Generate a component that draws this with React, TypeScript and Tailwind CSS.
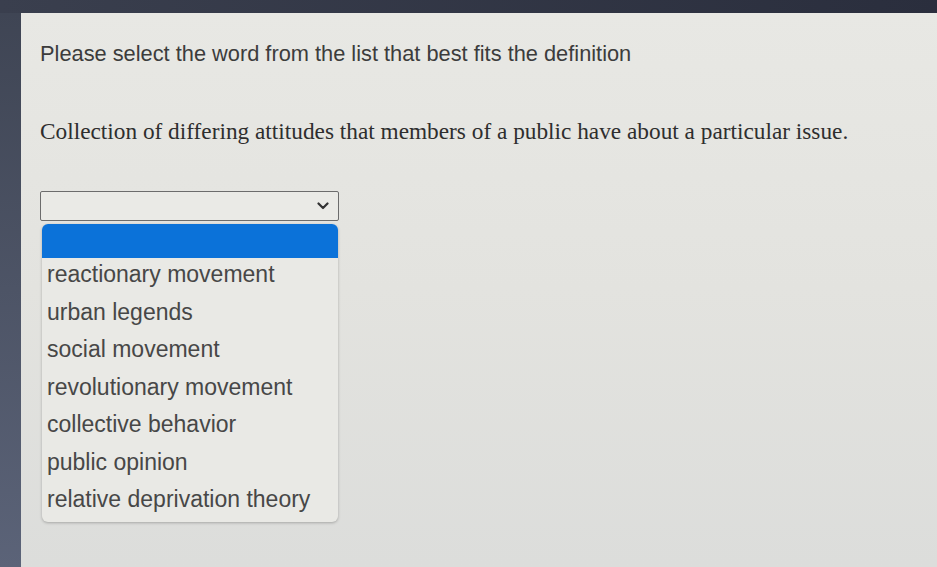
import React from 'react';

const options = [
  'reactionary movement',
  'urban legends',
  'social movement',
  'revolutionary movement',
  'collective behavior',
  'public opinion',
  'relative deprivation theory',
];

const Chevron: React.FC = () => (
  <svg width="12" height="8" viewBox="0 0 12 8" className="text-[#333]">
    <path d="M1.5 1.5 L6 6 L10.5 1.5" fill="none" stroke="currentColor" strokeWidth="2.2" strokeLinecap="round" strokeLinejoin="round" />
  </svg>
);

export default function App() {
  return (
    <div className="w-[937px] h-[567px] overflow-hidden flex flex-col bg-[#2c3040]">
      {/* top bezel */}
      <div className="h-[13px] bg-gradient-to-r from-[#3a3f4e] to-[#2a2e3d]" />
      <div className="flex flex-1">
        {/* left bezel */}
        <div className="w-[21px] bg-gradient-to-b from-[#3f4554] via-[#4d5466] to-[#5b6378]" />
        <div className="flex-1 bg-gradient-to-b from-[#e8e8e4] via-[#e3e3df] to-[#dcdddb] pl-[19px] pt-[28px]">
          <p className="text-[21.8px] leading-[26px] text-[#3c3c3c] font-['Liberation_Sans',Arial,sans-serif]">
            Please select the word from the list that best fits the definition
          </p>

          <p className="mt-[50px] text-[23.3px] leading-[28px] text-[#2e2e2e] font-['Liberation_Serif','Times_New_Roman',serif]">
            Collection of differing attitudes that members of a public have about a particular issue.
          </p>

          <div className="mt-[46px] w-[299px]">
            {/* closed select */}
            <div className="h-[30px] border border-[#6c6c6c] rounded-[2px] bg-[#eaeae6] flex items-center justify-end pr-[9px]">
              <Chevron />
            </div>

            {/* open list */}
            <div className="mt-[3px] ml-[2px] w-[296px] rounded-[6px] bg-[#e9e9e5] shadow-[0_1px_3px_rgba(0,0,0,0.25)] overflow-hidden">
              <div className="h-[34px] bg-[#0b72d9]" />
              <ul className="-mt-[2px] pb-[3px] font-['Liberation_Sans',Arial,sans-serif] text-[23px] text-[#474747]">
                {options.map((o) => (
                  <li key={o} className="h-[37.5px] leading-[37.5px] pl-[5px]">
                    {o}
                  </li>
                ))}
              </ul>
            </div>
          </div>
        </div>
      </div>
    </div>
  );
}
